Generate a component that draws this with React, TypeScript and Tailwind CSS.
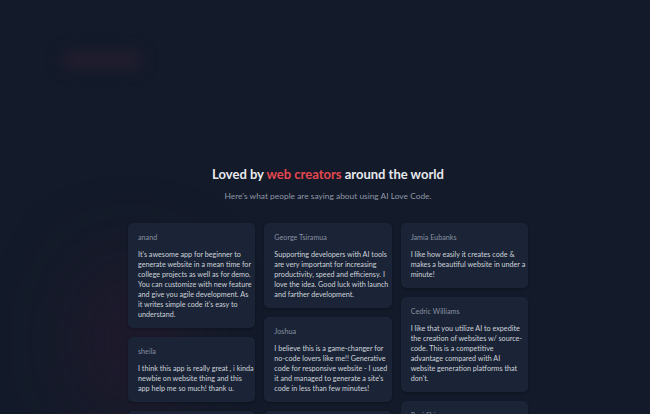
import React from 'react';

type Review = { name: string; lines: string[] };

const columns: Review[][] = [
  [
    {
      name: 'anand',
      lines: [
        "It's awesome app for beginner to",
        'generate website in a mean time for',
        'college projects as well as for demo.',
        'You can customize with new feature',
        'and give you agile development. As',
        "it writes simple code it's easy to",
        'understand.',
      ],
    },
    {
      name: 'sheila',
      lines: [
        'I think this app is really great , i kinda',
        'newbie on website thing and this',
        'app help me so much! thank u.',
      ],
    },
    { name: 'Daniel', lines: ['Great tool for quick prototypes.'] },
  ],
  [
    {
      name: 'George Tsiramua',
      lines: [
        'Supporting developers with AI tools',
        'are very important for increasing',
        'productivity, speed and efficiensy. I',
        'love the idea. Good luck with launch',
        'and farther development.',
      ],
    },
    {
      name: 'Joshua',
      lines: [
        'I believe this is a game-changer for',
        'no-code lovers like me!! Generative',
        'code for responsive website - I used',
        "it and managed to generate a site's",
        'code in less than few minutes!',
      ],
    },
    { name: 'Maria', lines: ['Simple and fast.'] },
  ],
  [
    {
      name: 'Jamia Eubanks',
      lines: [
        'I like how easily it creates code &',
        'makes a beautiful website in under a',
        'minute!',
      ],
    },
    {
      name: 'Cedric Williams',
      lines: [
        'I like that you utilize AI to expedite',
        'the creation of websites w/ source-',
        'code. This is a competitive',
        'advantage compared with AI',
        'website generation platforms that',
        "don't.",
      ],
    },
    { name: 'Ravi Shiva', lines: ['Amazing results every time.'] },
  ],
];

function Card({ r }: { r: Review }) {
  return (
    <div className="bg-[#1a2436] rounded-[5px] px-[10px] pt-[10px] pb-[8px] shadow-sm shadow-black/20">
      <p className="text-[7.2px] leading-[10px] text-[#878fa0]">{r.name}</p>
      <p className="mt-[7px] text-[7.2px] leading-[10px] text-[#cdd2da] whitespace-nowrap">
        {r.lines.map((l, i) => (
          <span key={i} className="block">
            {l}
          </span>
        ))}
      </p>
    </div>
  );
}

export default function App() {
  return (
    <div
      className="relative w-[650px] h-[414px] overflow-hidden bg-[#131a29]"
      style={{ fontFamily: 'Lato, "Noto Sans", sans-serif' }}
    >
      {/* glows */}
      <div className="absolute left-[62px] top-[52px] w-[80px] h-[16px] rounded-full bg-[#2c1f33]/70 blur-[8px]" />
      <div className="absolute left-[80px] top-[260px] w-[100px] h-[160px] rounded-full bg-[#2e1a30]/50 blur-[40px]" />

      <div className="relative flex flex-col items-center pt-[165px] pl-[6px]">
        <h2 className="text-[13px] leading-[18px] font-bold text-[#e7e9ee]">
          Loved by <span className="text-[#e5474f]">web creators</span> around the world
        </h2>
        <p className="mt-[7px] text-[8.4px] leading-[12px] text-[#8e96a6]">
          Here's what people are saying about using AI Love Code.
        </p>

        <div className="mt-[21px] w-[400px] grid grid-cols-3 gap-[9px] items-start">
          {columns.map((col, i) => (
            <div key={i} className="flex flex-col gap-[9px]">
              {col.map((r) => (
                <Card key={r.name} r={r} />
              ))}
            </div>
          ))}
        </div>
      </div>
    </div>
  );
}
